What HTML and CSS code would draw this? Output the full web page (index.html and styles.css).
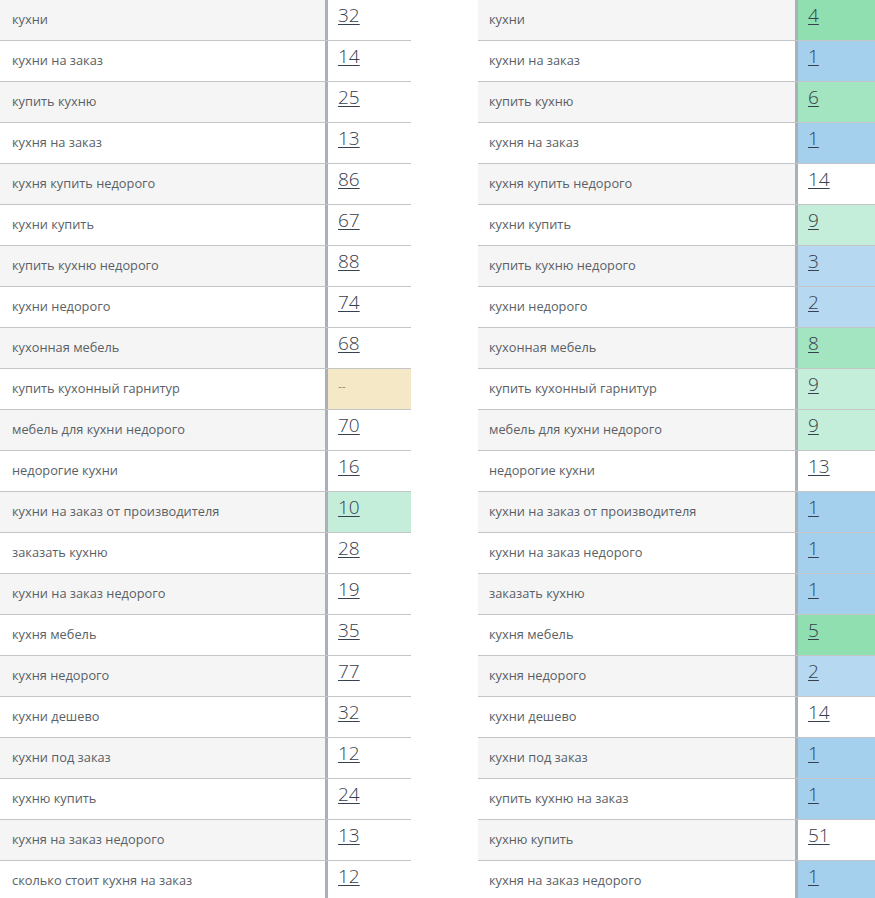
FILE: index.html
```html
<!DOCTYPE html>
<html lang="ru">
<head>
<meta charset="utf-8">
<link rel="stylesheet" href="styles.css">
</head>
<body>
<div class="page">
  <div class="table left">
    <div class="row"><div class="kw">кухни</div><div class="val"><a>32</a></div></div>
    <div class="row"><div class="kw">кухни на заказ</div><div class="val"><a>14</a></div></div>
    <div class="row"><div class="kw">купить кухню</div><div class="val"><a>25</a></div></div>
    <div class="row"><div class="kw">кухня на заказ</div><div class="val"><a>13</a></div></div>
    <div class="row"><div class="kw">кухня купить недорого</div><div class="val"><a>86</a></div></div>
    <div class="row"><div class="kw">кухни купить</div><div class="val"><a>67</a></div></div>
    <div class="row"><div class="kw">купить кухню недорого</div><div class="val"><a>88</a></div></div>
    <div class="row"><div class="kw">кухни недорого</div><div class="val"><a>74</a></div></div>
    <div class="row"><div class="kw">кухонная мебель</div><div class="val"><a>68</a></div></div>
    <div class="row"><div class="kw">купить кухонный гарнитур</div><div class="val none"><span>--</span></div></div>
    <div class="row"><div class="kw">мебель для кухни недорого</div><div class="val"><a>70</a></div></div>
    <div class="row"><div class="kw">недорогие кухни</div><div class="val"><a>16</a></div></div>
    <div class="row"><div class="kw">кухни на заказ от производителя</div><div class="val g3"><a>10</a></div></div>
    <div class="row"><div class="kw">заказать кухню</div><div class="val"><a>28</a></div></div>
    <div class="row"><div class="kw">кухни на заказ недорого</div><div class="val"><a>19</a></div></div>
    <div class="row"><div class="kw">кухня мебель</div><div class="val"><a>35</a></div></div>
    <div class="row"><div class="kw">кухня недорого</div><div class="val"><a>77</a></div></div>
    <div class="row"><div class="kw">кухни дешево</div><div class="val"><a>32</a></div></div>
    <div class="row"><div class="kw">кухни под заказ</div><div class="val"><a>12</a></div></div>
    <div class="row"><div class="kw">кухню купить</div><div class="val"><a>24</a></div></div>
    <div class="row"><div class="kw">кухня на заказ недорого</div><div class="val"><a>13</a></div></div>
    <div class="row"><div class="kw">сколько стоит кухня на заказ</div><div class="val"><a>12</a></div></div>
  </div>
  <div class="table right">
    <div class="row"><div class="kw">кухни</div><div class="val g1"><a>4</a></div></div>
    <div class="row"><div class="kw">кухни на заказ</div><div class="val b1"><a>1</a></div></div>
    <div class="row"><div class="kw">купить кухню</div><div class="val g2"><a>6</a></div></div>
    <div class="row"><div class="kw">кухня на заказ</div><div class="val b1"><a>1</a></div></div>
    <div class="row"><div class="kw">кухня купить недорого</div><div class="val"><a>14</a></div></div>
    <div class="row"><div class="kw">кухни купить</div><div class="val g3"><a>9</a></div></div>
    <div class="row"><div class="kw">купить кухню недорого</div><div class="val b2"><a>3</a></div></div>
    <div class="row"><div class="kw">кухни недорого</div><div class="val b2"><a>2</a></div></div>
    <div class="row"><div class="kw">кухонная мебель</div><div class="val g2"><a>8</a></div></div>
    <div class="row"><div class="kw">купить кухонный гарнитур</div><div class="val g3"><a>9</a></div></div>
    <div class="row"><div class="kw">мебель для кухни недорого</div><div class="val g3"><a>9</a></div></div>
    <div class="row"><div class="kw">недорогие кухни</div><div class="val"><a>13</a></div></div>
    <div class="row"><div class="kw">кухни на заказ от производителя</div><div class="val b1"><a>1</a></div></div>
    <div class="row"><div class="kw">кухни на заказ недорого</div><div class="val b1"><a>1</a></div></div>
    <div class="row"><div class="kw">заказать кухню</div><div class="val b1"><a>1</a></div></div>
    <div class="row"><div class="kw">кухня мебель</div><div class="val g1"><a>5</a></div></div>
    <div class="row"><div class="kw">кухня недорого</div><div class="val b2"><a>2</a></div></div>
    <div class="row"><div class="kw">кухни дешево</div><div class="val"><a>14</a></div></div>
    <div class="row"><div class="kw">кухни под заказ</div><div class="val b1"><a>1</a></div></div>
    <div class="row"><div class="kw">купить кухню на заказ</div><div class="val b1"><a>1</a></div></div>
    <div class="row"><div class="kw">кухню купить</div><div class="val"><a>51</a></div></div>
    <div class="row"><div class="kw">кухня на заказ недорого</div><div class="val b1"><a>1</a></div></div>
  </div>
</div>
</body>
</html>
```

FILE: styles.css
```css
html, body {
  margin: 0;
  padding: 0;
  background: #ffffff;
}

.page {
  display: flex;
  gap: 67px;
  height: 898px;
  overflow: hidden;
  font-family: "Open Sans", "DejaVu Sans", sans-serif;
}

.table {
  display: flex;
  flex-direction: column;
  flex: none;
}

.left { width: 411px; }
.right { width: 397px; }

.row {
  display: grid;
  height: 40px;
  border-bottom: 1px solid #c3c5c7;
  flex: none;
}

.left .row { grid-template-columns: 325px 1fr; }
.right .row { grid-template-columns: 317px 1fr; }

.row:nth-child(odd) .kw { background: #f5f5f5; }

.kw {
  font-size: 12.8px;
  line-height: 16px;
  color: #5a5f66;
  padding: 11px 0 0 12px;
  white-space: nowrap;
  overflow: hidden;
}

.right .kw { padding-left: 11px; }

.val {
  border-left: 3px solid #a9b0b7;
  padding: 2px 0 0 10px;
  font-size: 19px;
  font-weight: 300;
  background: #ffffff;
}

.val a {
  color: #36404e;
  text-decoration: underline;
  text-underline-offset: 2px;
  text-decoration-thickness: 1px;
}

.val.none span {
  font-size: 12px;
  color: #666;
  display: inline-block;
  padding-top: 5px;
}

.none { background: #f5e8c7; }
.g1 { background: #8fdfb1; }
.g2 { background: #a3e4c1; }
.g3 { background: #c4eed9; }
.b1 { background: #a4d0ee; }
.b2 { background: #b7d8f1; }
```
